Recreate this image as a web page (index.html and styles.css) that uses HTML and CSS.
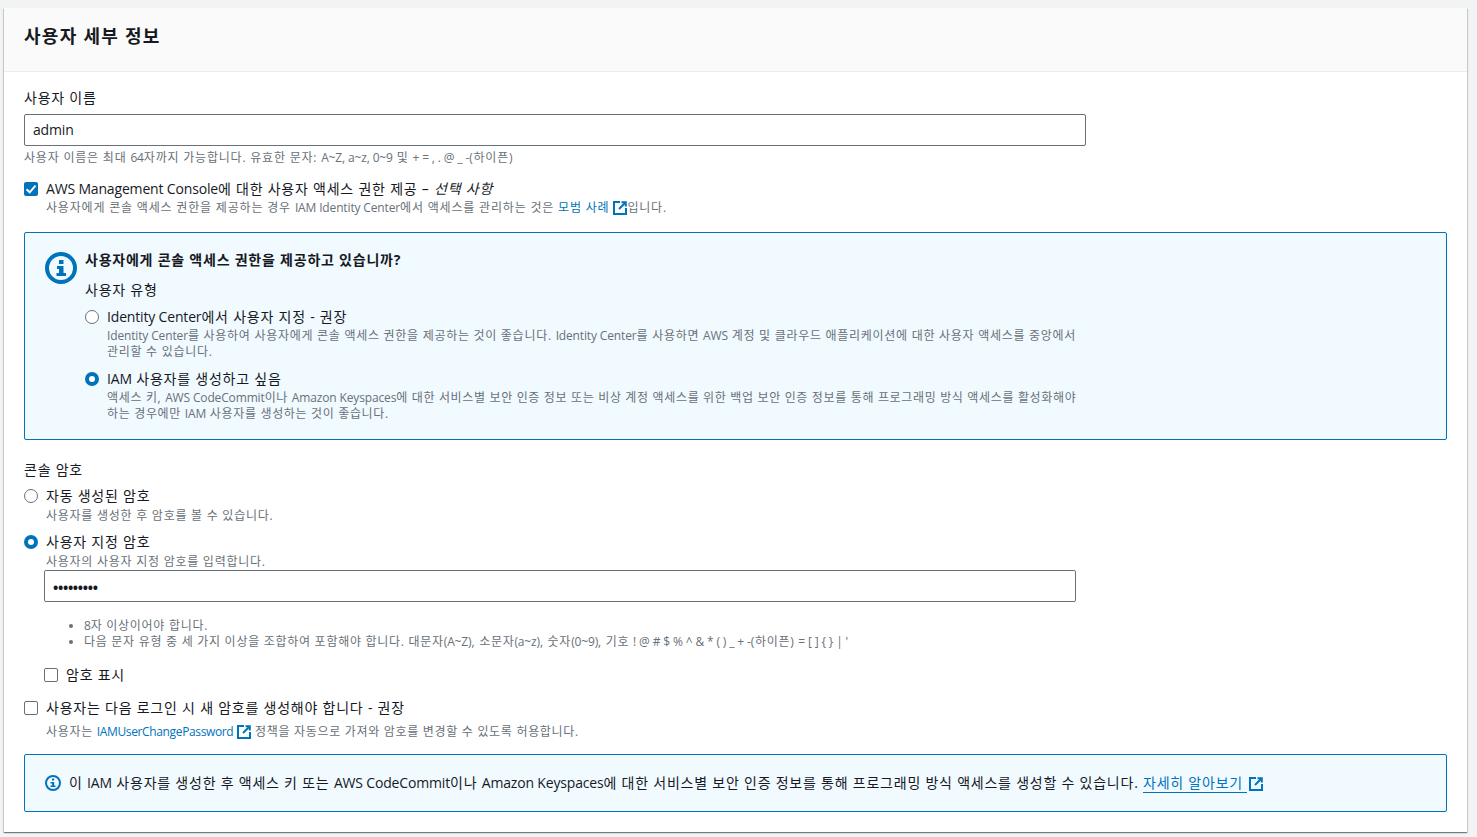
FILE: index.html
```html
<!DOCTYPE html>
<html lang="ko">
<head>
<meta charset="utf-8">
<title>사용자 세부 정보</title>
<link rel="stylesheet" href="styles.css">
</head>
<body>
<svg width="0" height="0" class="defs">
  <symbol id="ext" viewBox="0 0 14 14">
    <path d="M7 1H1v12h12V7" fill="none" stroke="currentColor" stroke-width="2"/>
    <path d="M8.500 1.200H12.800V5.500" fill="none" stroke="currentColor" stroke-width="2"/>
    <path d="M12.500 1.500 6 8" fill="none" stroke="currentColor" stroke-width="2"/>
  </symbol>
</svg>
<main class="card">
  <header class="card-head"><h2>사용자 세부 정보</h2></header>
  <div class="card-body">
    <label class="label">사용자 이름</label>
    <div class="input name-input"><span class="en">admin</span></div>
    <p class="hint name-hint">사용자 이름은 최대 <span class="en">64</span>자까지 가능합니다. 유효한 문자: <span class="en">A~Z, a~z, 0~9</span> 및 <span class="en">+ = , . @ _ -</span>(하이픈)</p>

    <div class="opt console-opt">
      <span class="check on"><svg viewBox="0 0 14 14" width="14" height="14"><path d="M2.500 7.200 5.700 10.300 11.500 3.700" fill="none" stroke="#fff" stroke-width="2"/></svg></span>
      <div>
        <div class="opt-title"><span class="en">AWS Management Console</span>에 대한 사용자 액세스 권한 제공 – <i>선택 사항</i></div>
        <p class="hint console-hint">사용자에게 콘솔 액세스 권한을 제공하는 경우 <span class="en">IAM Identity Center</span>에서 액세스를 관리하는 것은 <a class="link">모범 사례</a> <svg class="ext" width="14" height="14"><use href="#ext"/></svg>입니다.</p>
      </div>
    </div>

    <section class="info-box big">
      <svg class="info-big" viewBox="0 0 32 32" width="32" height="32">
        <circle cx="16" cy="16" r="14" fill="none" stroke="#0073bb" stroke-width="4"/>
        <rect x="14" y="8" width="4.500" height="4" fill="#0073bb"/>
        <path d="M12 14h6.500v7H21v3H11.500v-3H14v-4h-2z" fill="#0073bb"/>
      </svg>
      <div class="info-content">
        <h3>사용자에게 콘솔 액세스 권한을 제공하고 있습니까?</h3>
        <div class="type-label">사용자 유형</div>
        <div class="opt type-opt first">
          <span class="radio"></span>
          <div>
            <div class="opt-title"><span class="en">Identity Center</span>에서 사용자 지정 - 권장</div>
            <p class="hint wide first-desc"><span class="en">Identity Center</span>를 사용하여 사용자에게 콘솔 액세스 권한을 제공하는 것이 좋습니다. <span class="en">Identity Center</span>를 사용하면 <span class="en">AWS</span> 계정 및 클라우드 애플리케이션에 대한 사용자 액세스를 중앙에서 관리할 수 있습니다.</p>
          </div>
        </div>
        <div class="opt type-opt">
          <span class="radio on"></span>
          <div>
            <div class="opt-title"><span class="en">IAM</span> 사용자를 생성하고 싶음</div>
            <p class="hint wide">액세스 키, <span class="en">AWS CodeCommit</span>이나 <span class="en">Amazon Keyspaces</span>에 대한 서비스별 보안 인증 정보 또는 비상 계정 액세스를 위한 백업 보안 인증 정보를 통해 프로그래밍 방식 액세스를 활성화해야 하는 경우에만 <span class="en">IAM</span> 사용자를 생성하는 것이 좋습니다.</p>
          </div>
        </div>
      </div>
    </section>

    <label class="label pw-label">콘솔 암호</label>
    <div class="opt pw-opt">
      <span class="radio"></span>
      <div>
        <div class="opt-title">자동 생성된 암호</div>
        <p class="hint pw-hint">사용자를 생성한 후 암호를 볼 수 있습니다.</p>
      </div>
    </div>
    <div class="opt pw-opt second">
      <span class="radio on"></span>
      <div>
        <div class="opt-title">사용자 지정 암호</div>
        <p class="hint pw-hint">사용자의 사용자 지정 암호를 입력합니다.</p>
      </div>
    </div>
    <div class="pw-block">
      <div class="input pw-input">•••••••••</div>
      <ul class="rules">
        <li><span class="en">8</span>자 이상이어야 합니다.</li>
        <li>다음 문자 유형 중 세 가지 이상을 조합하여 포함해야 합니다. 대문자<span class="en">(A~Z)</span>, 소문자<span class="en">(a~z)</span>, 숫자<span class="en">(0~9)</span>, 기호 <span class="en">! @ # $ % ^ &amp; * ( ) _ + -</span>(하이픈) <span class="en">= [ ] { } | '</span></li>
      </ul>
      <div class="opt show-opt">
        <span class="check"></span>
        <div class="opt-title">암호 표시</div>
      </div>
    </div>
    <div class="opt reset-opt">
      <span class="check"></span>
      <div>
        <div class="opt-title">사용자는 다음 로그인 시 새 암호를 생성해야 합니다 - 권장</div>
        <p class="hint policy">사용자는 <a class="link policy-link">IAMUserChangePassword</a> <svg class="ext" width="14" height="14"><use href="#ext"/></svg> 정책을 자동으로 가져와 암호를 변경할 수 있도록 허용합니다.</p>
      </div>
    </div>

    <section class="info-box small">
      <svg class="info-small" viewBox="0 0 16 16" width="16" height="16">
        <circle cx="8" cy="8" r="7" fill="none" stroke="#0073bb" stroke-width="2"/>
        <rect x="7" y="3.500" width="2.200" height="2" fill="#0073bb"/>
        <path d="M5.500 7H9.200v3.500h1.300V12H5.500v-1.500h1.600V8.400H5.500z" fill="#0073bb"/>
      </svg>
      <p class="notice">이 <span class="en">IAM</span> 사용자를 생성한 후 액세스 키 또는 <span class="en">AWS CodeCommit</span>이나 <span class="en">Amazon Keyspaces</span>에 대한 서비스별 보안 인증 정보를 통해 프로그래밍 방식 액세스를 생성할 수 있습니다. <a class="link under">자세히 알아보기&nbsp;</a><svg class="ext after-link" width="14" height="14"><use href="#ext"/></svg></p>
    </section>
  </div>
</main>
</body>
</html>
```
FILE: styles.css
```css
* { box-sizing: border-box; }
html, body { margin: 0; height: 100%; overflow: hidden; }
body {
  background: #f2f3f3;
  padding: 8px 10px 0 4px;
  color: #16191f;
  font-family: "Open Sans", "Noto Sans CJK KR", sans-serif;
  font-size: 14px;
  line-height: 22px;
  letter-spacing: .055em;
}
.en { letter-spacing: -.012em; }
.defs { position: absolute; }
.card {
  background: #fff;
  height: 824px;
  box-shadow: 0 1px 1px 0 rgba(0, 28, 36, .4), 1px 1px 1px 0 rgba(0, 28, 36, .12), -1px 1px 1px 0 rgba(0, 28, 36, .12);
}
.card-head {
  height: 64px;
  background: #fafafa;
  border-bottom: 1px solid #eaeded;
  padding: 16px 20px;
}
h2 { margin: 0; font-size: 18px; line-height: 24px; font-weight: 700; letter-spacing: .07em; }
.card-body { padding: 15px 20px 0; }
.label { display: block; height: 22px; }
.input {
  height: 32px;
  border: 1px solid #687078;
  border-radius: 2px;
  background: #fff;
  padding: 4px 8px;
  line-height: 22px;
}
.name-input { width: 1062px; margin-top: 5px; }
.hint { margin: 0; font-size: 12px; line-height: 16px; color: #687078; letter-spacing: .055em; }
.name-hint { margin-top: 4px; letter-spacing: .066em; }
.opt { display: flex; gap: 8px; }
.opt-title { line-height: 18px; }
.console-opt { margin-top: 14px; }
.console-hint { margin-top: 2px; letter-spacing: .068em; }
.check {
  flex: none;
  width: 14px;
  height: 14px;
  margin-top: 2px;
  border: 1px solid #687078;
  border-radius: 2px;
  background: #fff;
  display: block;
}
.check.on { background: #0073bb; border: 0; }
.check svg { display: block; }
.radio {
  flex: none;
  width: 14px;
  height: 14px;
  margin-top: 2px;
  border: 1px solid #687078;
  border-radius: 50%;
  background: #fff;
}
.radio.on { border: 4px solid #0073bb; }
.link { color: #0073bb; }
.ext { color: #0073bb; vertical-align: -3px; }
.info-box {
  border: 1px solid #0073bb;
  border-radius: 2px;
  background: #f1faff;
  width: 1423px;
  display: flex;
}
.big { margin-top: 16px; height: 208px; padding: 17px 20px 0; gap: 8px; }
.info-big { flex: none; margin-top: 2px; }
.info-content { width: 1000px; }
h3 { margin: 0; font-size: 14px; line-height: 20px; font-weight: 700; }
.type-label { margin-top: 10px; line-height: 20px; }
.type-opt { margin-top: 10px; }
.type-opt.first { margin-top: 8px; }
.wide { margin-top: 2px; }
.first-desc { letter-spacing: .06em; }
.pw-label { margin-top: 19px; }
.pw-opt { margin-top: 6px; }
.pw-opt.second { margin-top: 9px; }
.pw-hint { margin-top: 3px; letter-spacing: .062em; }
.pw-block { margin: 0 0 0 20px; }
.pw-input { width: 1032px; padding-top: 6px; letter-spacing: -.3px; font-weight: 700; }
.rules { margin: 16px 0 0; padding-left: 40px; font-size: 12px; line-height: 16px; color: #687078; letter-spacing: .06em; }
.show-opt { margin-top: 16px; }
.reset-opt { margin-top: 15px; }
.policy { margin-top: 7px; letter-spacing: .058em; }
.policy-link { letter-spacing: -.03em; }
.small { margin-top: 14px; height: 58px; align-items: center; padding: 0 20px; gap: 8px; }
.info-small { flex: none; }
.notice { margin: 0; }
.under { border-bottom: 1px solid #0073bb; }
.after-link { margin-left: 2px; }
```
